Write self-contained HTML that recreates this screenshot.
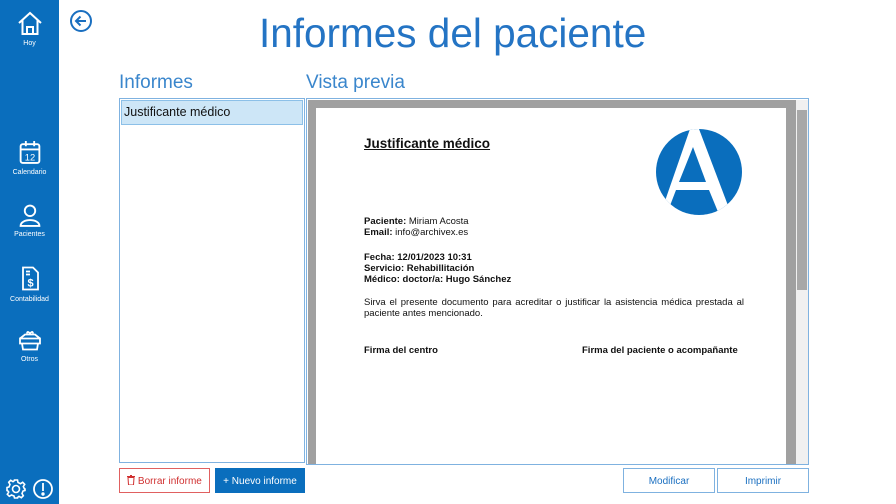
<!DOCTYPE html>
<html><head><meta charset="utf-8"><style>
*{margin:0;padding:0;box-sizing:border-box}
body{width:896px;height:504px;background:#fff;font-family:"Liberation Sans",sans-serif;position:relative;overflow:hidden}
.sb{position:absolute;left:0;top:0;width:59px;height:504px;background:#0a6ebd}
.ni{position:absolute;left:0;width:59px;text-align:center;color:#fff;font-size:7px}
.ni svg{display:block;margin:0 auto 4px}
.abs{position:absolute}
h1{position:absolute;left:259px;top:10px;font-weight:normal;font-size:40.5px;color:#2474c4;white-space:nowrap}
.lbl{position:absolute;top:72px;font-size:19px;color:#3a86cc}
.doc b{font-weight:bold}
.doc{position:absolute;font-size:9.5px;color:#111;line-height:11px}
.btn{position:absolute;top:468px;height:25px;font-size:10px;text-align:center;line-height:25px;border:1px solid transparent}
</style></head><body>
<div class="sb">
  <div class="ni" style="top:11px"><svg width="26" height="25" viewBox="0 0 26 25" fill="none" stroke="#fff" stroke-width="2"><path d="M2 12 L13 2 L24 12 M5.5 9 V23 H20.5 V9 M10 23 V16 H16 V23"/></svg>Hoy</div>
  <div class="ni" style="top:140px"><svg width="24" height="25" viewBox="0 0 22 24" fill="none" stroke="#fff" stroke-width="1.8"><rect x="2" y="4" width="18" height="18" rx="2"/><path d="M2 9 H20 M7 1 V6 M15 1 V6"/><text x="11" y="19.5" font-size="9" fill="#fff" stroke="none" text-anchor="middle" font-family="Liberation Sans">12</text></svg>Calendario</div>
  <div class="ni" style="top:204px"><svg width="24" height="23" viewBox="0 0 22 22" fill="none" stroke="#fff" stroke-width="1.8"><circle cx="11" cy="6.5" r="5"/><path d="M2 21 C2 13.5 20 13.5 20 21 Z"/></svg>Pacientes</div>
  <div class="ni" style="top:265px"><svg width="22" height="27" viewBox="0 0 22 26" fill="none" stroke="#fff" stroke-width="1.8"><path d="M4 2 H14 L19 7 V24 H4 Z"/><path d="M7 6 H11 M7 9 H11"/><text x="11.5" y="21" font-size="11" fill="#fff" stroke="none" text-anchor="middle" font-family="Liberation Sans" font-weight="bold">$</text></svg>Contabilidad</div>
  <div class="ni" style="top:329px"><svg width="26" height="23" viewBox="0 0 26 22" fill="none" stroke="#fff" stroke-width="1.8"><path d="M3 9 H23 V14 H3 Z M5 14 L6 20 H20 L21 14 M3 9 L8 5 H18 L23 9 M10 4 C10 1 13 3 13 5 C13 3 16 1 16 4"/></svg>Otros</div>
  <svg class="abs" style="left:5px;top:478px" width="22" height="22" viewBox="0 0 22 22" fill="none" stroke="#fff" stroke-width="1.6"><circle cx="11" cy="11" r="3.5"/><path d="M9.5 2 H12.5 L13 4.5 L15.5 5.7 L17.7 4.3 L19.7 6.3 L18.3 8.5 L19.5 11 L20 11 V12.5 L18 13 L17 15.5 L18.3 17.7 L16.3 19.7 L14 18.3 L12.5 19.5 L12.5 20 H9.5 L9 18 L6.5 17 L4.3 18.3 L2.3 16.3 L3.7 14 L2.5 12.5 H2 V9.5 L4 9 L5 6.5 L3.7 4.3 L5.7 2.3 L8 3.7 L9.5 2.5 Z"/></svg>
  <svg class="abs" style="left:32px;top:478px" width="22" height="22" viewBox="0 0 22 22" fill="none" stroke="#fff" stroke-width="1.8"><circle cx="11" cy="11" r="9"/><path d="M11 5 V13"/><circle cx="11" cy="16" r="0.8" fill="#fff"/></svg>
</div>
<svg class="abs" style="left:69px;top:9px" width="24" height="24" viewBox="0 0 24 24" fill="none" stroke="#1a6fc0" stroke-width="2"><circle cx="12" cy="12" r="10"/><path d="M17 12 H7 M11.5 7.5 L7 12 L11.5 16.5"/></svg>
<h1>Informes del paciente</h1>
<div class="lbl" style="left:119px">Informes</div>
<div class="lbl" style="left:306px">Vista previa</div>
<div class="abs" style="left:119px;top:98px;width:186px;height:365px;border:1px solid #7fb2e0"></div>
<div class="abs" style="left:121px;top:100px;width:182px;height:25px;background:#cde6f7;border:1px solid #8cc0e8;font-size:12.5px;line-height:23px;padding-left:2px;color:#111">Justificante médico</div>
<div class="abs" style="left:306px;top:98px;width:503px;height:367px;border:1px solid #7fb2e0"></div>
<div class="abs" style="left:308px;top:100px;width:488px;height:364px;background:#a0a0a0"></div>
<div class="abs" style="left:316px;top:108px;width:470px;height:356px;background:#fff"></div>
<div class="abs" style="left:796px;top:100px;width:12px;height:364px;background:#f0f0f0"></div>
<div class="abs" style="left:797px;top:110px;width:10px;height:180px;background:#a8a8a8"></div>
<div class="doc" style="left:364px;top:136px;font-size:13.5px;font-weight:bold;text-decoration:underline;line-height:16px">Justificante médico</div>
<svg class="abs" style="left:655px;top:129px" width="88" height="88" viewBox="0 0 88 88"><defs><clipPath id="c"><circle cx="44" cy="43" r="43"/></clipPath></defs><circle cx="44" cy="43" r="43" fill="#0a6ebd"/><g clip-path="url(#c)"><polygon fill="#fff" points="35,0 44,0 80,95 2,95"/><polygon fill="#0a6ebd" points="38,18 24,53 51,53"/><polygon fill="#0a6ebd" points="21,61 54,61 68,95 8,95"/></g></svg>
<div class="doc" style="left:364px;top:216px"><b>Paciente:</b> Miriam Acosta<br><b>Email:</b> info@archivex.es</div>
<div class="doc" style="left:364px;top:252px;font-weight:bold">Fecha: 12/01/2023 10:31<br>Servicio: Rehabillitación<br>Médico: doctor/a: Hugo Sánchez</div>
<div class="doc" style="left:364px;top:297px;width:380px;text-align:justify">Sirva el presente documento para acreditar o justificar la asistencia médica prestada al paciente antes mencionado.</div>
<div class="doc" style="left:364px;top:345px;font-weight:bold">Firma del centro</div>
<div class="doc" style="left:582px;top:345px;font-weight:bold">Firma del paciente o acompañante</div>
<div class="btn" style="left:119px;width:91px;border-color:#e06060;color:#d03030"><svg width="8" height="10" viewBox="0 0 8 10" style="vertical-align:-1px"><path d="M0 1.5 H8 M3 0.5 H5 M1 2.5 H7 L6.5 10 H1.5 Z" stroke="#d03030" fill="none"/></svg> Borrar informe</div>
<div class="btn" style="left:215px;width:90px;background:#0a6ebd;color:#fff;border-color:#0a6ebd">+ Nuevo informe</div>
<div class="btn" style="left:623px;width:92px;border-color:#7fb2e0;color:#1a6fc0">Modificar</div>
<div class="btn" style="left:717px;width:92px;border-color:#7fb2e0;color:#1a6fc0">Imprimir</div>
</body></html>
